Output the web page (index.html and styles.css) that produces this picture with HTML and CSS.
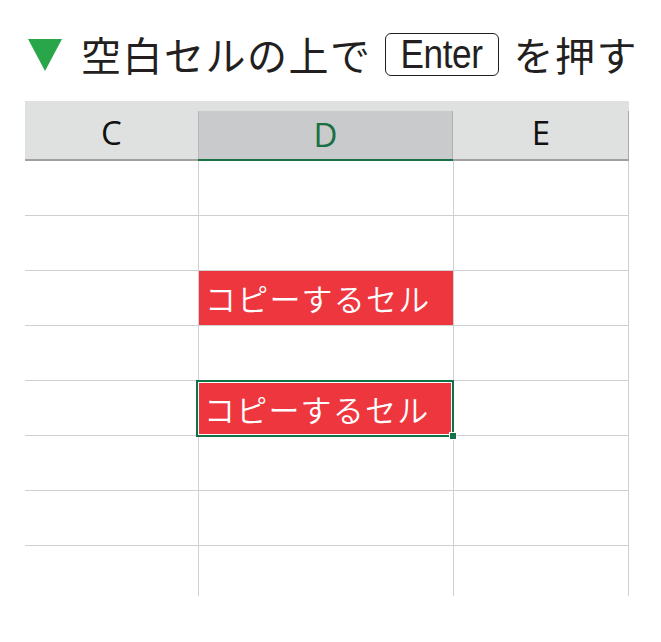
FILE: index.html
```html
<!DOCTYPE html>
<html lang="ja">
<head>
<meta charset="utf-8">
<link rel="stylesheet" href="styles.css">
</head>
<body>
<div class="title">
  <svg class="tri" width="34" height="32" viewBox="0 0 34 32"><polygon points="0,0 34,0 17,32" fill="#29a64a"/></svg>
  <span class="ttext">空白セルの上で</span>
  <span class="key"><span class="keyt">Enter</span></span>
  <span class="ttext">を押す</span>
</div>
<div class="sheet">
  <div class="hdr hc">C</div>
  <div class="hdr hd"><span>D</span></div>
  <div class="hdr he">E</div>

  <div class="cell c"></div><div class="cell d"></div><div class="cell e"></div>
  <div class="cell c"></div><div class="cell d"></div><div class="cell e"></div>
  <div class="cell c"></div><div class="cell d red">コピーするセル</div><div class="cell e"></div>
  <div class="cell c"></div><div class="cell d"></div><div class="cell e"></div>
  <div class="cell c"></div><div class="cell d sel"><div class="redin">コピーするセル</div><i class="handle"></i></div><div class="cell e"></div>
  <div class="cell c"></div><div class="cell d"></div><div class="cell e"></div>
  <div class="cell c"></div><div class="cell d"></div><div class="cell e"></div>
  <div class="cell c last"></div><div class="cell d last"></div><div class="cell e last"></div>
</div>
</body>
</html>
```
FILE: styles.css
```css
html, body {
  margin: 0;
  padding: 0;
  background: #fff;
}
body {
  width: 661px;
  height: 642px;
  overflow: hidden;
  font-family: "Noto Sans CJK JP", "Noto Sans", sans-serif;
}
.title {
  display: flex;
  align-items: center;
  height: 42px;
  margin-top: 33px;
  padding-left: 28px;
  color: #231f20;
}
.tri {
  margin-right: 19px;
  margin-top: 2px;
}
.ttext {
  font-size: 40px;
  line-height: 42px;
  letter-spacing: 1.5px;
}
.key {
  box-sizing: border-box;
  width: 114px;
  height: 43px;
  border: 1.5px solid #231f20;
  border-radius: 6px;
  margin: 0 15px 0 13px;
  display: flex;
  align-items: center;
  justify-content: center;
  overflow: hidden;
}
.keyt {
  display: inline-block;
  font-family: "Liberation Sans", Arial, sans-serif;
  font-size: 40px;
  line-height: 40px;
  transform: scaleX(0.88);
  letter-spacing: -0.5px;
}
.sheet {
  display: grid;
  grid-template-columns: 173px 255px 176px;
  grid-template-rows: 60px repeat(7, 55px) 50px;
  margin: 26px 0 0 25px;
  width: 604px;
}
.hdr {
  background: #dfe0e0;
  border-bottom: 2px solid #a0a0a0;
  box-sizing: border-box;
  display: flex;
  align-items: center;
  justify-content: center;
  font-family: "Open Sans", "Noto Sans", sans-serif;
  font-size: 33px;
  color: #111;
  padding-top: 4px;
}
.hd {
  padding-top: 10px;
  align-items: stretch;
  border-bottom-color: #1a6f43;
}
.hd span {
  flex: 1;
  background: #c9cacb;
  border-left: 1px solid #b8b8b8;
  border-right: 1px solid #b0b0b0;
  display: flex;
  align-items: center;
  justify-content: center;
  color: #1a6f43;
  padding-bottom: 2px;
}
.he {
  position: relative;
}
.he::after {
  content: "";
  position: absolute;
  right: 0;
  top: 10px;
  bottom: 0;
  width: 1px;
  background: #a8a8a8;
}
.cell {
  border-bottom: 1px solid #d0d0d0;
  box-sizing: border-box;
}
.cell.last {
  border-bottom: none;
}
.d {
  border-left: 1px solid #d0d0d0;
  position: relative;
}
.e {
  border-left: 1px solid #d0d0d0;
  border-right: 1px solid #d0d0d0;
}
.red {
  background: #ee363e;
  color: #fff;
  font-size: 31px;
  font-weight: 350;
  line-height: 54px;
  padding-left: 6px;
  letter-spacing: 1.2px;
}
.sel {
  border: 2px solid #137245;
  margin: -1px -1px -1px -2px;
  padding: 1px;
  z-index: 1;
}
.redin {
  background: #ee363e;
  color: #fff;
  font-size: 31px;
  font-weight: 350;
  line-height: 51px;
  height: 51px;
  padding-left: 5px;
  letter-spacing: 1.2px;
}
.handle {
  position: absolute;
  right: -5px;
  bottom: -5px;
  width: 6px;
  height: 6px;
  background: #137245;
  border: 1px solid #fff;
}
```
